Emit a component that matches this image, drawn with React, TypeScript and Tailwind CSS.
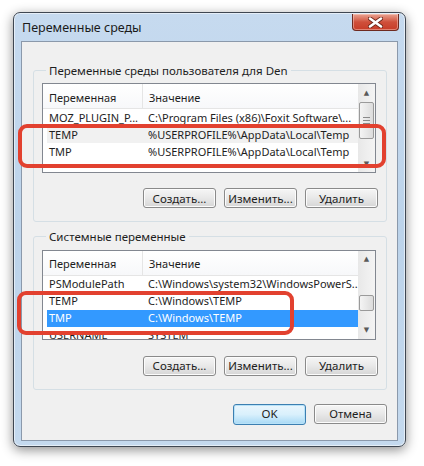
import type { ReactNode } from "react";

const font = { fontFamily: '"Noto Sans", "DejaVu Sans", sans-serif' };

type Row = { name: string; value: string; tone?: "hover" | "selected" };

const userRows: Row[] = [
  { name: "MOZ_PLUGIN_P...", value: "C:\\Program Files (x86)\\Foxit Software\\..." },
  { name: "TEMP", value: "%USERPROFILE%\\AppData\\Local\\Temp", tone: "hover" },
  { name: "TMP", value: "%USERPROFILE%\\AppData\\Local\\Temp" },
  { name: "", value: "" },
];

const systemRows: Row[] = [
  { name: "PSModulePath", value: "C:\\Windows\\system32\\WindowsPowerS..." },
  { name: "TEMP", value: "C:\\Windows\\TEMP" },
  { name: "TMP", value: "C:\\Windows\\TEMP", tone: "selected" },
  { name: "USERNAME", value: "SYSTEM" },
];

function WinButton({ children, focused }: { children: ReactNode; focused?: boolean }) {
  return (
    <button
      className={
        focused
          ? "flex h-[21px] w-[73px] items-center justify-center rounded-[3px] border border-[#3c7fb1] bg-gradient-to-b from-[#eaf6fd] via-[#d9f0fc] to-[#a7d9f5] text-[11.5px] text-[#1e1e1e] shadow-[inset_0_0_0_1px_#b8e2f8]"
          : "flex h-[20px] w-[73px] items-center justify-center rounded-[3px] border border-[#8a8a8a] bg-gradient-to-b from-[#f6f6f6] via-[#e8e8e8] to-[#d6d6d6] text-[11.5px] text-[#1e1e1e] shadow-[inset_0_0_0_1px_#fcfcfc]"
      }
    >
      {children}
    </button>
  );
}

function ScrollBar({ thumbTop, thumbHeight }: { thumbTop: number; thumbHeight: number }) {
  return (
    <div className="flex w-[17px] shrink-0 flex-col bg-gradient-to-r from-[#e8e8e8] to-[#f4f4f4]">
      <div className="flex h-[17px] items-center justify-center text-[7px] text-[#5a5a5a]">▲</div>
      <div className="flex-1" style={{ paddingTop: thumbTop }}>
        <div
          className="mx-[1px] flex flex-col items-center justify-center gap-[2px] rounded-[2px] border border-[#9a9a9a] bg-gradient-to-r from-[#f4f4f4] to-[#dcdcdc]"
          style={{ height: thumbHeight }}
        >
          {thumbHeight > 24 && (
            <>
              <div className="h-px w-[7px] bg-[#8a8a8a]" />
              <div className="h-px w-[7px] bg-[#8a8a8a]" />
              <div className="h-px w-[7px] bg-[#8a8a8a]" />
            </>
          )}
        </div>
      </div>
      <div className="flex h-[17px] items-center justify-center text-[7px] text-[#5a5a5a]">▼</div>
    </div>
  );
}

function ListView({ rows, thumbTop, thumbHeight }: { rows: Row[]; thumbTop: number; thumbHeight: number }) {
  return (
    <div className="flex h-[90px] w-[334px] overflow-hidden border border-[#828790] bg-white">
      <div className="flex min-w-0 flex-1 flex-col">
        <div className="flex h-[25px] shrink-0 items-center border-b border-[#e5e5e5] bg-gradient-to-b from-white to-[#f7f8fa] text-[11px] text-[#1e1e1e]">
          <div className="flex h-full w-[100px] items-center border-r border-[#e5e5e5] pl-[6px] pt-[3px]">Переменная</div>
          <div className="flex h-full items-center pl-[6px] pt-[3px]">Значение</div>
        </div>
        {rows.map((r, i) => (
          <div
            key={i}
            className={
              "ml-[4px] flex h-[17px] shrink-0 items-center text-[11px] " +
              (r.tone === "selected"
                ? "bg-[#3399ff] text-white"
                : r.tone === "hover"
                  ? "bg-[#f1f1f1] text-[#1e1e1e]"
                  : "text-[#1e1e1e]")
            }
          >
            <div className="w-[96px] shrink-0 whitespace-nowrap pl-[2px]">{r.name}</div>
            <div className="whitespace-nowrap pl-[5px]">{r.value}</div>
          </div>
        ))}
      </div>
      <ScrollBar thumbTop={thumbTop} thumbHeight={thumbHeight} />
    </div>
  );
}

function Group({ title, children }: { title: string; children: ReactNode }) {
  return (
    <fieldset className="mx-[11px] w-[354px] rounded-[3px] border border-[#d5dfe5] px-[8px] pb-[13px] pt-[4px]">
      <legend className="ml-[4px] px-[3px] text-[11.5px] text-[#1e1e1e]">{title}</legend>
      {children}
    </fieldset>
  );
}

export default function App() {
  return (
    <div className="relative h-[466px] w-[424px] overflow-hidden bg-white pl-[13px] pt-[12px]" style={font}>
      <div className="flex h-[435px] w-[393px] flex-col rounded-[7px] border border-[#3f4752] bg-gradient-to-b from-[#c6daef] via-[#bcd3ea] to-[#c4d9ee] shadow-[0_3px_12px_rgba(0,0,0,0.45),inset_0_0_0_1px_rgba(255,255,255,0.55)]">
        <div className="flex h-[28px] shrink-0 items-start justify-between pl-[8px] pr-[6px]">
          <div className="pt-[6px] text-[12.5px] text-[#1a1a1a]">Переменные среды</div>
          <div className="mt-[1px] flex h-[17px] w-[47px] items-center justify-center rounded-b-[4px] border border-t-0 border-[#6e2a20] bg-gradient-to-b from-[#e9a392] via-[#cf4f3b] to-[#c73c27] shadow-[inset_0_0_0_1px_rgba(255,220,210,0.45)]">
            <svg width="15" height="11" viewBox="0 0 15 11">
              <path d="M2 1.5 L13 9.5 M13 1.5 L2 9.5" stroke="#6a2418" strokeWidth="4.2" strokeLinecap="round" />
              <path d="M2 1.5 L13 9.5 M13 1.5 L2 9.5" stroke="#ffffff" strokeWidth="2.6" strokeLinecap="round" />
            </svg>
          </div>
        </div>
        <div className="mx-[7px] mb-[5px] flex flex-1 flex-col border border-[#8b99ab] bg-[#f0f0f0] pt-[20px]">
          <Group title="Переменные среды пользователя для Den">
            <ListView rows={userRows} thumbTop={1} thumbHeight={37} />
            <div className="mt-[15px] flex justify-end gap-[8px]">
              <WinButton>Создать...</WinButton>
              <WinButton>Изменить...</WinButton>
              <WinButton>Удалить</WinButton>
            </div>
          </Group>
          <div className="h-[6px]" />
          <Group title="Системные переменные">
            <ListView rows={systemRows} thumbTop={27} thumbHeight={16} />
            <div className="mt-[16px] flex justify-end gap-[8px]">
              <WinButton>Создать...</WinButton>
              <WinButton>Изменить...</WinButton>
              <WinButton>Удалить</WinButton>
            </div>
          </Group>
          <div className="mr-[10px] mt-[14px] flex justify-end gap-[8px]">
            <WinButton focused>OK</WinButton>
            <WinButton>Отмена</WinButton>
          </div>
        </div>
      </div>
      <div className="absolute left-[18px] top-[124px] h-[44px] w-[368px] rounded-[9px] border-[4px] border-[#e2412f]" />
      <div className="absolute left-[17px] top-[291px] h-[44px] w-[277px] rounded-[9px] border-[4px] border-[#e2412f]" />
    </div>
  );
}
